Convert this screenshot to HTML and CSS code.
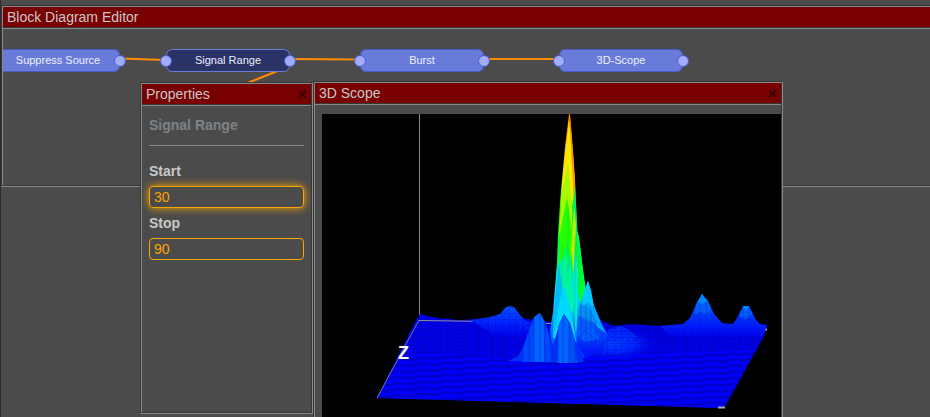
FILE: index.html
```html
<!DOCTYPE html>
<html lang="en">
<head>
<meta charset="utf-8">
<title>Block Diagram Editor</title>
<link rel="stylesheet" href="styles.css">
</head>
<body>
<main class="desktop">
  <section class="window window-editor">
    <header class="titlebar"><h1>Block Diagram Editor</h1></header>
    <div class="diagram">
      <svg class="wires" aria-hidden="true">
        <path d="M117 29.500 L163 31 M287 30 L357 30.500 M481 30 H556 M287 37 L237 57"/>
      </svg>
      <div class="node node-suppress">Suppress Source<i class="port port-out"></i></div>
      <div class="node node-range selected">Signal Range<i class="port port-in"></i><i class="port port-out"></i></div>
      <div class="node node-burst">Burst<i class="port port-in"></i><i class="port port-out"></i></div>
      <div class="node node-scope">3D-Scope<i class="port port-in"></i><i class="port port-out"></i></div>
    </div>
  </section>

  <section class="window window-properties">
    <header class="titlebar"><h2>Properties</h2>
      <button class="close" type="button" aria-label="Close"><svg viewBox="0 0 9 9"><path d="M1 1 L8 8 M8 1 L1 8"/></svg></button>
    </header>
    <form class="properties">
      <h3>Signal Range</h3>
      <hr>
      <label for="start">Start</label>
      <input id="start" class="active" type="text" value="30">
      <label for="stop">Stop</label>
      <input id="stop" type="text" value="90">
    </form>
  </section>

  <section class="window window-scope">
    <header class="titlebar"><h2>3D Scope</h2>
      <button class="close" type="button" aria-label="Close"><svg viewBox="0 0 9 9"><path d="M1 1 L8 8 M8 1 L1 8"/></svg></button>
    </header>
    <div class="scope">
      <svg class="plot" viewBox="322 114 459 303" role="img" aria-label="3D surface plot">
        <defs>
          <pattern id="front" width="24" height="6" patternUnits="userSpaceOnUse" patternTransform="skewY(-3)">
            <rect width="24" height="6" fill="#0000fa"/>
            <path d="M0 2h9v2H0z M9 1h8v2H9z M17 2h7v2h-7z" fill="#0000c4"/>
            <path d="M2 4h9v1H2z M13 3h6v1h-6z" fill="#0000dc"/>
          </pattern>
          <pattern id="back" width="13" height="4" patternUnits="userSpaceOnUse" patternTransform="skewY(2)">
            <rect width="13" height="4" fill="#0000ec"/>
            <path d="M0 1h6v1H0z M5 2h5v1H5z M9 3h4v1H9z M11 0h1v3h-1z" fill="#0000c0"/>
          </pattern>
          <pattern id="mesh" width="7" height="6" patternUnits="userSpaceOnUse">
            <path d="M0 1h4v1H0z M4 4h3v1H4z M5 0h1v4H5z" fill="#0000a0" opacity=".3"/>
          </pattern>
          <linearGradient id="hill" gradientUnits="userSpaceOnUse" x1="0" y1="294" x2="0" y2="337">
            <stop offset="0" stop-color="#0078ff"/><stop offset=".35" stop-color="#004cff"/><stop offset=".7" stop-color="#0020ff"/><stop offset="1" stop-color="#0000ea"/>
          </linearGradient>
          <radialGradient id="swell">
            <stop offset="0" stop-color="#0040ff"/><stop offset=".5" stop-color="#0024ff"/><stop offset="1" stop-color="#0000ee" stop-opacity="0"/>
          </radialGradient>
          <linearGradient id="flank" gradientUnits="userSpaceOnUse" x1="0" y1="281" x2="0" y2="352">
            <stop offset="0" stop-color="#00d8ff"/><stop offset=".35" stop-color="#00a8ff"/><stop offset=".65" stop-color="#0058ff"/><stop offset="1" stop-color="#0014f8"/>
          </linearGradient>
          <linearGradient id="tower" gradientUnits="userSpaceOnUse" x1="0" y1="114" x2="0" y2="362">
            <stop offset="0" stop-color="#ff8000"/><stop offset=".18" stop-color="#ffb000"/><stop offset=".28" stop-color="#c0ff00"/><stop offset=".38" stop-color="#20ff00"/><stop offset=".54" stop-color="#00ff40"/><stop offset=".65" stop-color="#00f0a0"/><stop offset=".75" stop-color="#00d8ff"/><stop offset=".86" stop-color="#0080ff"/><stop offset="1" stop-color="#0030ff"/>
          </linearGradient>
        </defs>

        <path d="M419.500 114V320" fill="none" stroke="#888"/>
        <path d="M420 314 L437 318 L460 320 L480 319 L500 317 L520 318 L550 322 L600 320 L614 326 L630 324 L660 326 L690 324 L730 325 L767 325 L764 336 L724 408 L377 398 L415 322Z" fill="url(#back)"/>
        <path d="M403 350 L430 352 L520 360 L756 350 L724 408 L377 398Z" fill="url(#front)"/>
        <path d="M419 320 L377 398" stroke="#777799" fill="none"/>
        <path d="M419 320.500 L490 321.500 M545 323.500H556" stroke="#9090a0" fill="none"/>
        <path d="M490 322 L530 323 M678 328 L763 330" stroke="#6070d8" stroke-dasharray="4 3" fill="none"/>
        <path d="M764 329.500h3 M718 407.500h7" stroke="#aaa" stroke-width="2"/>

        <path d="M470 320 L490 317 L500 314 L506 307 L510 306 L514 307 L521 316 L527 322 L540 322 L534 337 L495 335Z" fill="url(#hill)"/>
        <path d="M470 320 L490 317 L500 314 L506 307 L510 306 L514 307 L521 316 L527 322 L540 322 L534 337 L495 335Z" fill="url(#mesh)"/>
        <path d="M660 326 L683 324 L690 318 L697 302 L702 294 L708 301 L714 314 L722 323 L733 324 L738 316 L743 306 L749 306 L756 320 L760 324 L767 325 L763 337 L700 338 L670 337Z" fill="url(#hill)"/>
        <path d="M698 302 L702 294 L707 301 L711 309 L706 314 L700 311 L694 315Z M743 306 H749 L752 314 L746 319 L740 316Z" fill="#0060ff"/>
        <path d="M698 302 L702 294 L707 301 L702 304Z M743 306H749L746 310Z" fill="#0088ff"/>
        <path d="M694 308v18 M700 304v25 M706 302v27 M712 314v15 M738 316v12 M743 309v18 M749 309v18 M754 317v11 M692 320l10-7 10 10 8 4 M735 325l11-9 11 10" stroke="#0020b8" fill="none" opacity=".5"/>
        <path d="M606 325 L660 327 L762 329 L756 344 L700 340 L650 346 L606 352Z" fill="url(#mesh)"/>
        <ellipse cx="612" cy="344" rx="48" ry="17" fill="url(#swell)"/>
        <path d="M602 333 L612 328 L621 326 L629 330 L637 337 L626 341 L608 341Z" fill="#0030ff" opacity=".75"/>
        <ellipse cx="612" cy="342" rx="42" ry="15" fill="url(#mesh)"/>

        <path d="M569 114H570L573 150L575 180L576 203L577 231L579 236L582 262L585 283L586 290L592 319L585 357L578 363L552 348L550 330L553 312L555 287L557 263L558 235L560 203L562 180L565 147Z" fill="url(#tower)"/>
        <path d="M569 120L573 168L574 208L571 199L568 163L563 205L561 205L565 155Z" fill="#ffe800"/>
        <path d="M570 115L575 182L574 202L571 148Z" fill="#ff9800"/>
        <path d="M568 163L572 208L573 233H559L562 192Z" fill="#a8f800"/>
        <path d="M567 197L572 231L574 268L566 242L559 275L560 233Z" fill="#24ff00"/>
        <path d="M573 201L575 187L578 240L580 278L575 304L571 263Z" fill="#00e76a"/>
        <path d="M574 207L571 250L574 280L576 225Z" fill="#b8ef00"/>
        <path d="M565 257L570 276L574 301L570 333L564 288L556 322L555 302L559 263Z" fill="#00f5a0"/>
        <path d="M565 286L571 310L576 342L570 358L553 337L554 316L559 295Z" fill="#00d8ff"/>
        <path d="M559 263L562 287L554 335L555 298Z" fill="#00b8ff"/>
        <path d="M572 290L575 250L579 279L576 336Z" fill="#00e8d8"/>
        <path d="M577 231L580 247L585 289L581 306L578 292Z" fill="#00ff34"/>
        <path d="M588 281L591 290L594 306L599 317L602 325L608 335L603 351L586 358L577 345L578 310Z" fill="url(#flank)"/>
        <path d="M588 281L594 307L587 302L581 308L584 292Z" fill="#00ccff"/>
        <path d="M594 306L600 321L606 333L597 327L589 311Z" fill="#00a4ff"/>
        <path d="M581 304L590 309L598 322L588 322L578 316Z" fill="#0090f4"/>
        <path d="M578 316L591 324L600 339L584 342L578 335Z" fill="#005cff"/>
        <path d="M581 302V345M586 304V349M591 310V349M596 320V346M579 316L593 323L603 335M577 340L585 330L597 341L602 335" stroke="#0030c0" fill="none" opacity=".5"/>
        <path d="M562 244V300M568 205V283M575 236V328M579 255V315" stroke="#00a860" fill="none" opacity=".3"/>

        <path d="M508 361 L518 356 L523 347 L529 329 L534 317 L540 313 L545 322 L549 333 L553 346 L559 325 L564 314 L570 323 L575 340 L581 352 L584 362 L575 363Z" fill="#0030f8"/>
        <path d="M523 349L530 329L535 317L540 313L545 322L549 335L551 362H523Z" fill="#0048fc"/>
        <path d="M534 317L540 313L544 322V362H534Z" fill="#0064ff"/>
        <path d="M564 314L570 325L575 342L577 363H557L559 325Z" fill="#0050f4"/>
        <path d="M558 327L564 314L569 325V363H558Z" fill="#0064ff"/>
        <path d="M523 348V361M529 331V361M534 318V362M540 314V362M545 323V362M552 347V362M558 330V363M563 316V363M569 324V363M575 342V363" stroke="#0028c8" fill="none" opacity=".55"/>

        <text class="axis" x="398" y="359">Z</text>
      </svg>
    </div>
  </section>
</main>
</body>
</html>
```
FILE: styles.css
```css
* {
  box-sizing: border-box;
}

body {
  margin: 0;
  background: #4b4b4b;
  color: #c8c8c8;
  font: 14px/20px "Liberation Sans", Arial, sans-serif;
}

.desktop {
  position: relative;
  height: 100vh;
  overflow: hidden;
  border-left: 1px solid #2c2c2c;
}

.window {
  position: absolute;
  display: flex;
  flex-direction: column;
  border: 2px solid;
  border-style: groove;
  border-color: #8a8a8a;
  background: #4b4b4b;
}

.window-editor {
  left: 0;
  right: -8px;
  top: 5px;
  height: 182px;
}

.window-properties {
  left: 139px;
  top: 82px;
  width: 173px;
  height: 332px;
}

.window-scope {
  left: 312px;
  top: 81px;
  width: 470px;
}

.titlebar {
  display: flex;
  align-items: center;
  justify-content: space-between;
  padding: 0 4px;
  background: #780000;
  border-bottom: 2px groove #8a8a8a;
}

.titlebar h1,
.titlebar h2 {
  margin: 0;
  font-size: 14px;
  font-weight: normal;
}

.close {
  display: flex;
  padding: 0;
  border: 0;
  background: none;
}

.close svg {
  width: 9px;
  height: 9px;
  fill: none;
  stroke: #3c0000;
  stroke-width: 2;
}

.diagram {
  position: relative;
  flex: 1;
  overflow: hidden;
}

.wires {
  position: absolute;
  width: 100%;
  height: 100%;
  fill: none;
  stroke: #ff8c00;
  stroke-width: 2;
}

.node {
  position: absolute;
  top: 20px;
  width: 124px;
  height: 23px;
  border: 1px solid #4c5bc8;
  border-radius: 6px;
  background: #687bd9;
  color: #eef0ff;
  font-size: 11px;
  line-height: 21px;
  text-align: center;
}

.node.selected {
  border-color: #687bd9;
  background: #293366;
}

.node-suppress { left: -7px; }
.node-range { left: 163px; }
.node-burst { left: 357px; }
.node-scope { left: 556px; }

.port {
  position: absolute;
  top: 5px;
  width: 12px;
  height: 12px;
  border: 1px solid #4c5bc8;
  border-radius: 50%;
  background: #a0adff;
}

.port-in { left: -7px; }
.port-out { right: -7px; }

.properties {
  display: flex;
  flex-direction: column;
  padding: 9px 7px;
}

.properties h3 {
  margin: 0;
  color: #7b8388;
  font-size: 14px;
}

.properties hr {
  width: 100%;
  margin: 10px 0 15px;
  border: 0;
  border-top: 1px solid #8a8a8a;
}

.properties label {
  font-weight: bold;
}

.properties input {
  width: 100%;
  height: 22px;
  margin: 5px 0;
  padding: 0 4px;
  border: 1px solid #ffa500;
  border-radius: 4px;
  background: transparent;
  color: #ffa500;
  font: inherit;
}

.properties input.active {
  box-shadow: 0 0 8px #ffa500;
}

.scope {
  padding: 9px 0 0 7px;
}

.plot {
  display: block;
  width: 100%;
  background: #000;
}

.axis {
  fill: #fff;
  font-size: 18px;
  font-weight: bold;
}
```
